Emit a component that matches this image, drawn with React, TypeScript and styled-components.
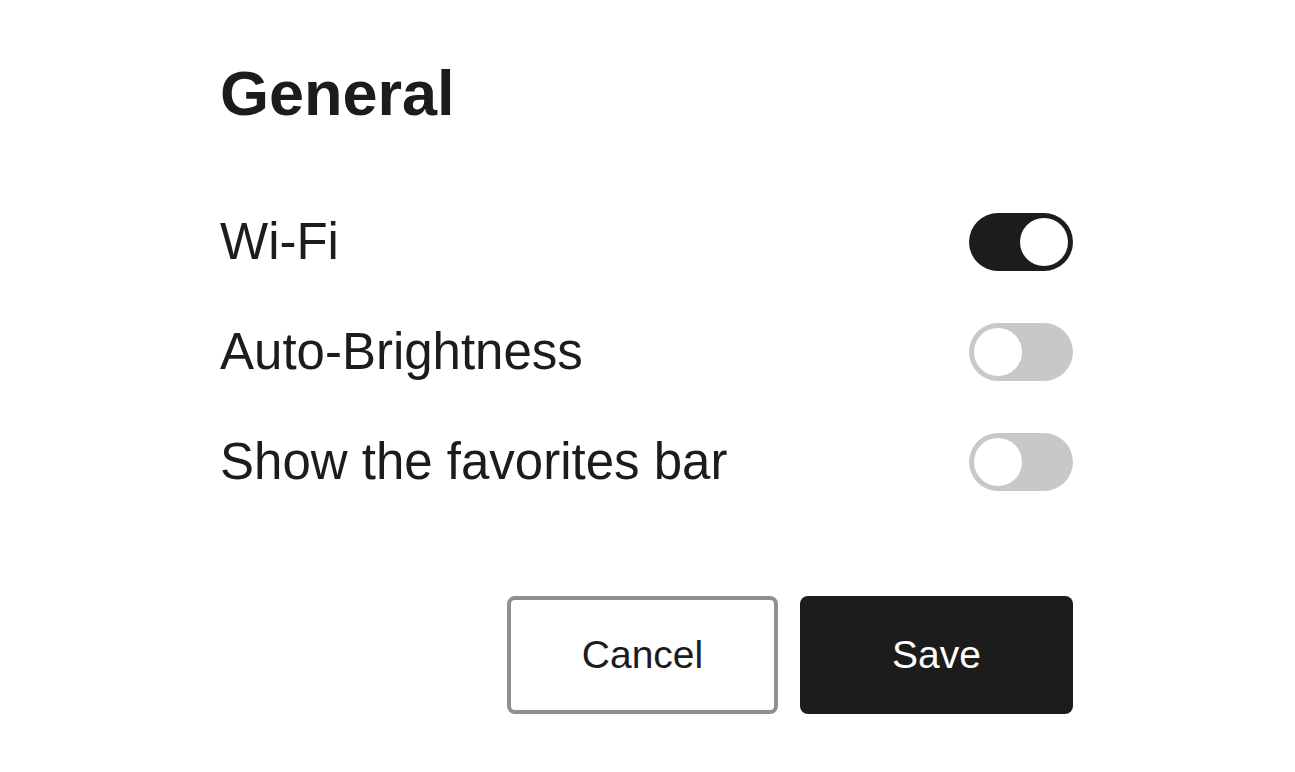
import React, { useState } from 'react'
import styled, { createGlobalStyle } from 'styled-components'

const GlobalStyle = createGlobalStyle`
  html, body {
    margin: 0;
    padding: 0;
    background: #ffffff;
  }
  body {
    font-family: 'Liberation Sans', Arial, sans-serif;
    color: #1c1c1c;
  }
`

const Panel = styled.div`
  width: 853px;
  padding: 62px 0 0 220px;
`

const Title = styled.h1`
  margin: 0;
  font-size: 63px;
  line-height: 62px;
  font-weight: 700;
  color: #1c1c1c;
`

const List = styled.div`
  margin-top: 63px;
  display: flex;
  flex-direction: column;
`

const Row = styled.div`
  height: 110px;
  display: flex;
  align-items: center;
  justify-content: space-between;
`

const Label = styled.span`
  font-size: 51px;
  line-height: 50px;
  color: #1c1c1c;
`

const Track = styled.button<{ $on: boolean }>`
  position: relative;
  width: 104px;
  height: 58px;
  padding: 0;
  border: none;
  border-radius: 29px;
  background: ${props => (props.$on ? '#1c1c1c' : '#c8c8c8')};
  cursor: pointer;
`

const Knob = styled.span<{ $on: boolean }>`
  position: absolute;
  top: 5px;
  left: ${props => (props.$on ? '51px' : '5px')};
  width: 48px;
  height: 48px;
  border-radius: 50%;
  background: #ffffff;
`

const Actions = styled.div`
  margin-top: 79px;
  display: flex;
  justify-content: flex-end;
  gap: 22px;
`

const Button = styled.button<{ $primary?: boolean }>`
  width: ${props => (props.$primary ? '273px' : '271px')};
  height: 118px;
  box-sizing: border-box;
  border-radius: 8px;
  border: ${props => (props.$primary ? 'none' : '4px solid #8f8f8f')};
  background: ${props => (props.$primary ? '#1c1c1c' : '#ffffff')};
  color: ${props => (props.$primary ? '#ffffff' : '#1c1c1c')};
  font-family: 'Liberation Sans', Arial, sans-serif;
  font-size: 39px;
  cursor: pointer;
`

function Toggle({ on, onChange }: { on: boolean; onChange: (v: boolean) => void }) {
  return (
    <Track $on={on} onClick={() => onChange(!on)}>
      <Knob $on={on} />
    </Track>
  )
}

export default function App() {
  const [settings, setSettings] = useState({
    wifi: true,
    brightness: false,
    favorites: false,
  })

  const rows: { key: keyof typeof settings; label: string }[] = [
    { key: 'wifi', label: 'Wi-Fi' },
    { key: 'brightness', label: 'Auto-Brightness' },
    { key: 'favorites', label: 'Show the favorites bar' },
  ]

  return (
    <>
      <GlobalStyle />
      <Panel>
        <Title>{'General'}</Title>
        <List>
          {rows.map(row => (
            <Row key={row.key}>
              <Label>{row.label}</Label>
              <Toggle
                on={settings[row.key]}
                onChange={v => setSettings({ ...settings, [row.key]: v })}
              />
            </Row>
          ))}
        </List>
        <Actions>
          <Button>{'Cancel'}</Button>
          <Button $primary>{'Save'}</Button>
        </Actions>
      </Panel>
    </>
  )
}
